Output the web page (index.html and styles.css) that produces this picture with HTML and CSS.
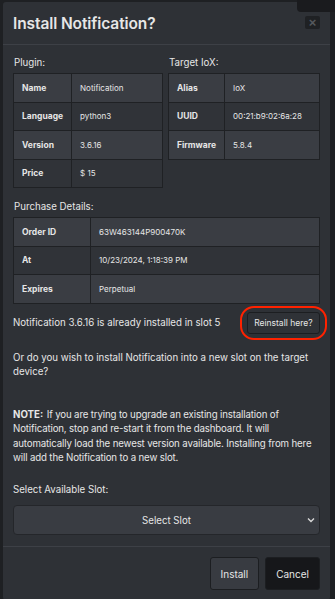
FILE: index.html
```html
<!DOCTYPE html>
<html lang="en">
<head>
    <meta charset="UTF-8">
    <meta name="viewport" content="width=device-width, initial-scale=1.0">
    <title>Install Notification?</title>
    <link rel="stylesheet" href="styles.css">
</head>
<body>
    <div class="toast-corner"></div>
    <div class="modal">
        <div class="modal-header">
            <h5 class="modal-title">Install Notification?</h5>
            <button class="close-btn" aria-label="Close">&times;</button>
        </div>
        <div class="modal-body">
            <div class="info-grid">
                <div>
                    <div class="section-label">Plugin:</div>
                    <table class="info-table plugin-table">
                        <tr><th>Name</th><td>Notification</td></tr>
                        <tr><th>Language</th><td>python3</td></tr>
                        <tr><th>Version</th><td>3.6.16</td></tr>
                        <tr><th>Price</th><td>$ 15</td></tr>
                    </table>
                </div>
                <div>
                    <div class="section-label">Target IoX:</div>
                    <table class="info-table target-table">
                        <tr><th>Alias</th><td>IoX</td></tr>
                        <tr><th>UUID</th><td>00:21:b9:02:6a:28</td></tr>
                        <tr><th>Firmware</th><td>5.8.4</td></tr>
                    </table>
                </div>
            </div>

            <div class="section-label purchase-label">Purchase Details:</div>
            <table class="info-table purchase-table">
                <tr><th>Order ID</th><td>63W463144P900470K</td></tr>
                <tr><th>At</th><td>10/23/2024, 1:18:39 PM</td></tr>
                <tr><th>Expires</th><td>Perpetual</td></tr>
            </table>

            <div class="installed-row">
                <span>Notification 3.6.16 is already installed in slot 5</span>
                <span class="highlight">
                    <button class="btn btn-secondary btn-sm">Reinstall here?</button>
                </span>
            </div>

            <p class="question">Or do you wish to install Notification into a new slot on the target device?</p>

            <p class="note"><b>NOTE:</b> If you are trying to upgrade an existing installation of Notification, stop and re-start it from the dashboard. It will automatically load the newest version available. Installing from here will add the Notification to a new slot.</p>

            <label class="slot-label" for="slot">Select Available Slot:</label>
            <div class="select-wrap">
                <select id="slot" class="slot-select">
                    <option>Select Slot</option>
                </select>
                <svg class="chevron" width="8" height="6" viewBox="0 0 8 6"><path d="M1 1.5 L4 4.5 L7 1.5" fill="none" stroke="#d8d8d8" stroke-width="1.4"/></svg>
            </div>
        </div>
        <div class="modal-footer">
            <button class="btn btn-secondary">Install</button>
            <button class="btn btn-dark">Cancel</button>
        </div>
    </div>
</body>
</html>
```

FILE: styles.css
```css
/* --- Theme --- */
:root {
    --page-bg: #1e2023;
    --modal-bg: #2e3136;
    --line: #3d4046;
    --cell-border: #1f2124;
    --row-light: #3a3d43;
    --row-dark: #303338;
    --text: #e6e6e6;
    --font: 'Inter', 'Liberation Sans', sans-serif;
}
body {
    margin: 0;
    padding: 2px 5px 0 3px;
    background-color: var(--page-bg);
    color: var(--text);
    font-family: var(--font);
    font-size: 9.7px;
    overflow: hidden;
}
.toast-corner {
    position: absolute;
    top: 0;
    right: 0;
    width: 38px;
    height: 12px;
    background-color: #1a1b1e;
    border-bottom-left-radius: 4px;
    z-index: 2;
}

/* --- Modal --- */
.modal {
    background-color: var(--modal-bg);
    border-radius: 3px;
    min-height: 598px;
}
.modal-header {
    display: flex;
    align-items: center;
    justify-content: space-between;
    height: 42px;
    padding: 0 10px;
    border-bottom: 1px solid var(--line);
}
.modal-title {
    margin: 0;
    font-size: 15.5px;
    font-weight: 600;
    letter-spacing: -0.1px;
}
.close-btn {
    width: 15px;
    height: 13px;
    margin-top: -2px;
    padding: 0;
    border: none;
    border-radius: 2px;
    background-color: #1f2124;
    color: #55585d;
    font-size: 13px;
    line-height: 13px;
    font-weight: 700;
}
.modal-body {
    padding: 11px 10px 0 10px;
}

/* --- Tables --- */
.info-grid {
    display: grid;
    grid-template-columns: 150px 152px;
    column-gap: 5px;
}
.section-label {
    line-height: 14px;
    margin: 0 0 3px 1px;
}
.purchase-label { margin-top: 12px; }
.info-table {
    width: 100%;
    border-collapse: collapse;
    font-size: 8px;
}
.info-table th,
.info-table td {
    height: 27.5px;
    padding: 0 8px;
    border: 1px solid var(--cell-border);
    text-align: left;
}
.info-table th {
    font-weight: 700;
    font-size: 8.5px;
}
.info-table tr:nth-child(odd) { background-color: var(--row-light); }
.info-table tr:nth-child(even) { background-color: var(--row-dark); }
.plugin-table th { width: 40px; }
.target-table th { width: 39px; }
.purchase-table th { width: 60px; }

/* --- Status rows --- */
.installed-row {
    display: flex;
    align-items: center;
    justify-content: space-between;
    margin-top: 2px;
}
.highlight {
    display: inline-flex;
    padding: 4px 5px;
    margin-right: -6.5px;
    border: 2.5px solid #ff2200;
    border-radius: 14px;
}
.btn {
    font-family: var(--font);
    color: var(--text);
    border: 1px solid #1c1e21;
    border-radius: 3px;
    cursor: pointer;
}
.btn-secondary { background-color: #383b41; }
.btn-dark { background-color: #16171a; }
.btn-sm {
    font-size: 8.5px;
    padding: 0 6px;
    height: 22px;
    background-color: #2f3237;
}
.question {
    margin: 11px 0 0 0;
    line-height: 14.3px;
}
.note {
    margin: 29px 0 0 0;
    line-height: 14.3px;
    letter-spacing: -0.15px;
}
.note b {
    letter-spacing: 0;
    margin-right: 1px;
}
.slot-label {
    display: block;
    margin-top: 18px;
    line-height: 14px;
}
.select-wrap {
    position: relative;
    margin-top: 8px;
}
.slot-select {
    width: 100%;
    height: 30px;
    appearance: none;
    background-color: #393c42;
    color: var(--text);
    border: 1px solid #24262a;
    border-radius: 4px;
    font-family: var(--font);
    font-size: 9.7px;
    text-align: center;
    text-align-last: center;
}
.chevron {
    position: absolute;
    right: 5px;
    top: 12px;
}

/* --- Footer --- */
.modal-footer {
    display: flex;
    justify-content: flex-end;
    gap: 6px;
    margin-top: 11px;
    padding: 10px 10px 0 10px;
    border-top: 1px solid var(--line);
}
.modal-footer .btn {
    height: 33px;
    font-size: 10px;
    padding: 0 10px;
}
```
